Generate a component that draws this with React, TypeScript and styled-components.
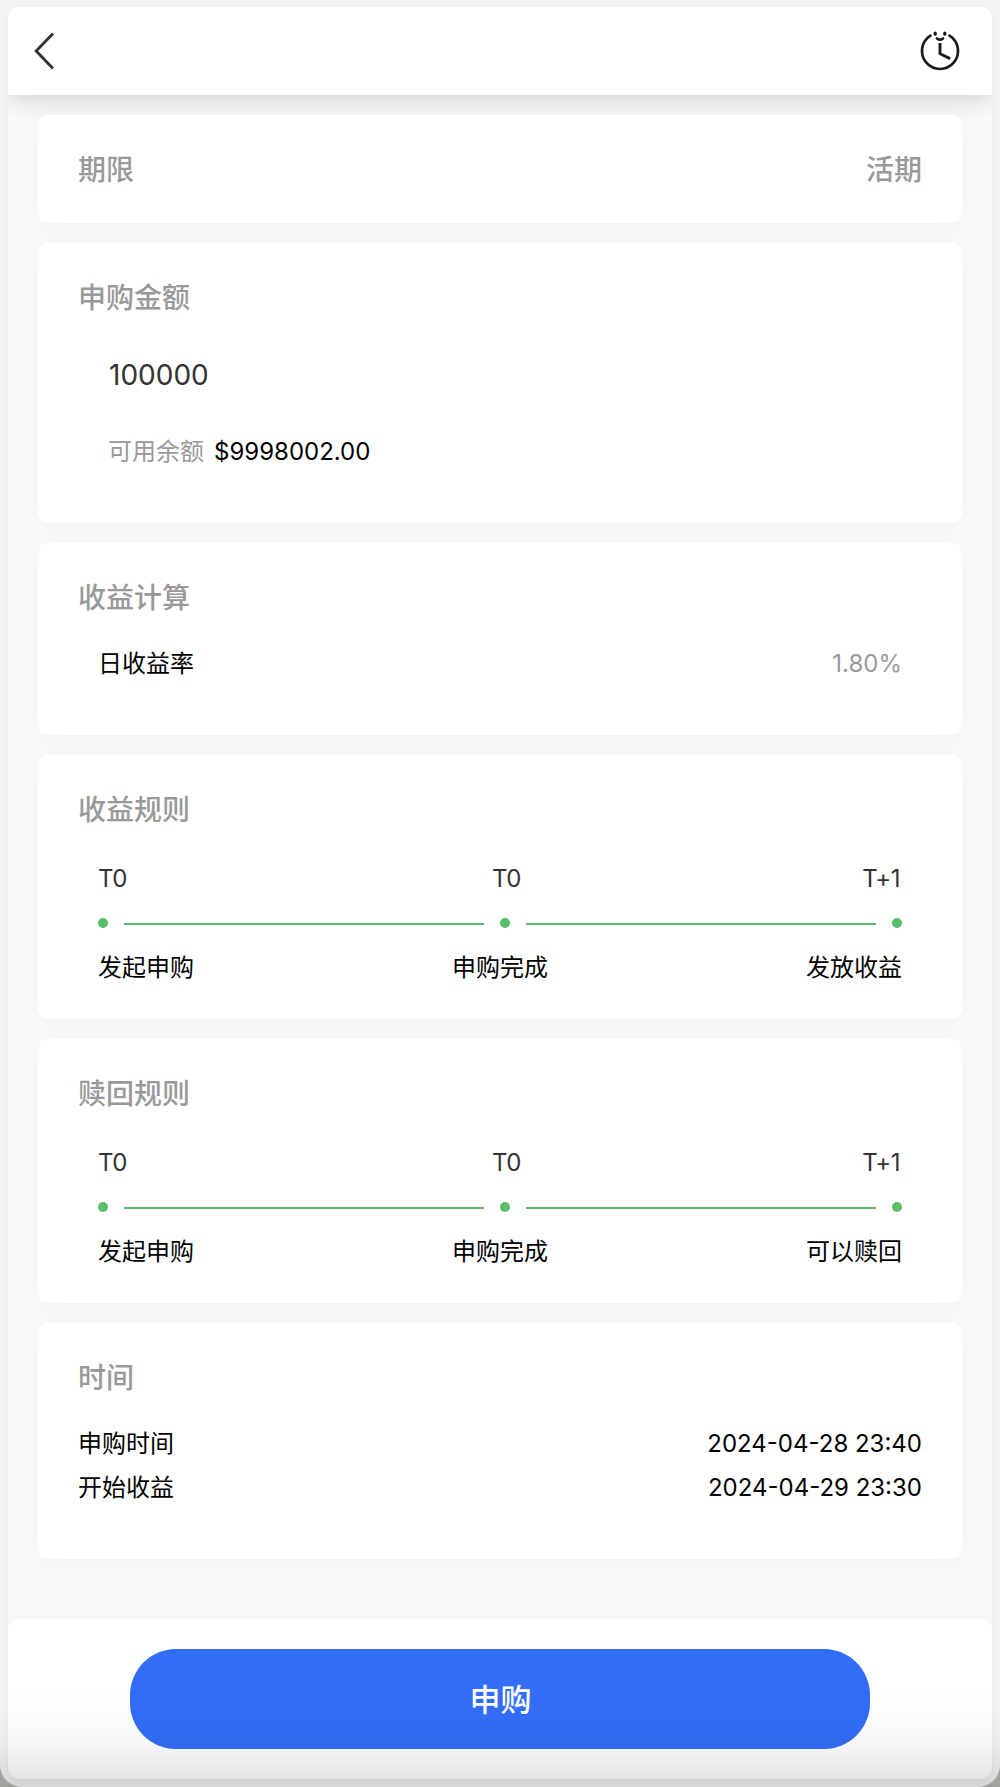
import React from "react";
import styled, { createGlobalStyle } from "styled-components";

const GlobalStyle = createGlobalStyle`
  * { box-sizing: border-box; }
  body {
    margin: 0;
    background: #a3a29d;
    font-family: Inter, "Noto Sans CJK SC", sans-serif;
    font-weight: 420;
    color: #000;
  }
`;

const Frame = styled.div`
  position: relative;
  width: 1000px;
  height: 1787px;
  padding: 7px 8px 8px;
  border-radius: 0 0 22px 22px;
  background: #f2f4f6;
  overflow: hidden;
`;

const BottomShade = styled.div`
  position: absolute;
  left: 0;
  right: 0;
  bottom: 0;
  height: 100px;
  pointer-events: none;
  background: linear-gradient(
    rgba(0, 0, 0, 0),
    rgba(0, 0, 0, 0.008) 25%,
    rgba(0, 0, 0, 0.035) 55%,
    rgba(0, 0, 0, 0.09) 85%,
    rgba(0, 0, 0, 0.12)
  );
`;

const Screen = styled.div`
  display: flex;
  flex-direction: column;
  height: 100%;
  border-radius: 12px;
  background: #fafafa;
  overflow: hidden;
`;

const ScreenShadow = styled.div`
  height: 100%;
  border-radius: 12px;
  box-shadow: 0 2px 5px rgba(0, 0, 0, 0.05);
`;

const Header = styled.header`
  display: flex;
  flex: none;
  align-items: center;
  justify-content: space-between;
  height: 88px;
  padding: 0 30px 0 24px;
  background: #fff;
  box-shadow: 0 4px 24px rgba(0, 0, 0, 0.18);
`;

const IconButton = styled.button`
  display: flex;
  padding: 0;
  border: 0;
  background: none;
`;

const Content = styled.main`
  display: flex;
  flex: 1;
  flex-direction: column;
  gap: 20px;
  padding: 20px 30px 0;
`;

const Card = styled.section<{ $height: number }>`
  height: ${(p) => p.$height}px;
  padding: 41px 40px 39px;
  border-radius: 10px;
  background: #fff;
  box-shadow: 0 4px 24px rgba(0, 0, 0, 0.04);
`;

const Row = styled.div<{ $inset?: number; $top?: number }>`
  display: flex;
  align-items: center;
  justify-content: space-between;
  margin: ${(p) => p.$top ?? 0}px ${(p) => p.$inset ?? 0}px 0;
`;

const Title = styled.div`
  font-size: 28px;
  font-weight: 450;
  line-height: 28px;
  color: #999;
`;

const Text = styled.span<{ $color?: string; $line?: number }>`
  font-size: 24px;
  line-height: ${(p) => p.$line ?? 24}px;
  color: ${(p) => p.$color ?? "#000"};
`;

const Amount = styled.div`
  margin: 49px 0 0 31px;
  font-size: 28px;
  font-weight: 400;
  line-height: 28px;
  color: #333;
`;

const Balance = styled.div`
  display: flex;
  gap: 10px;
  margin: 51px 0 0 30px;
`;

const Days = styled.div`
  display: grid;
  grid-template-columns: 394px 1fr auto;
  margin: 43px 22px 0 20px;
  letter-spacing: -0.5px;
`;

const Track = styled.div`
  display: flex;
  align-items: center;
  gap: 16px;
  height: 10px;
  margin: 27px 20px 0;
`;

const Dot = styled.i`
  flex: none;
  width: 10px;
  height: 10px;
  border-radius: 50%;
  background: #58be6a;
`;

const Line = styled.i<{ $width: number }>`
  width: ${(p) => p.$width}px;
  height: 2px;
  margin-top: 2px;
  background: #58be6a;
`;

const Footer = styled.footer`
  display: flex;
  flex: none;
  justify-content: center;
  height: 160px;
  padding-top: 30px;
  border-radius: 12px 12px 0 0;
  background: #fff;
  box-shadow: 0 -2px 20px rgba(0, 0, 0, 0.03);
`;

const BuyButton = styled.button`
  width: 740px;
  height: 100px;
  padding: 2px 0 0 1px;
  border: 0;
  border-radius: 46px;
  background: #326df6;
  color: #fff;
  font: 460 31px / 98px Inter, "Noto Sans CJK SC", sans-serif;
`;

const BackIcon = () => (
  <svg width="24" height="40" viewBox="0 0 24 40" fill="none" stroke="#333" strokeWidth="2.900">
    <path d="M21 2.600 4.200 20l16.800 17.400" />
  </svg>
);

const ClockIcon = () => (
  <svg width="44" height="44" viewBox="0 0 44 44" fill="none" stroke="#1a1a1a" strokeWidth="2.700" strokeLinecap="round">
    <path d="M12.500 6.700A18 18 0 1 0 31.500 6.700" />
    <path d="M22 15.500v9.200l8.800 4.300" strokeWidth="2.900" strokeLinecap="square" />
    <path d="M19 9.400q3 2.400 6 0" strokeWidth="2.600" />
    <path d="M17.200 4v1.200M26.800 4v1.200" strokeWidth="3.200" />
  </svg>
);

interface Step {
  day: string;
  label: string;
}

const earningSteps: Step[] = [
  { day: "T0", label: "发起申购" },
  { day: "T0", label: "申购完成" },
  { day: "T+1", label: "发放收益" },
];

const redeemSteps: Step[] = [
  { day: "T0", label: "发起申购" },
  { day: "T0", label: "申购完成" },
  { day: "T+1", label: "可以赎回" },
];

const times = [
  ["申购时间", "2024-04-28 23:40"],
  ["开始收益", "2024-04-29 23:30"],
];

function RuleCard({ title, steps }: { title: string; steps: Step[] }) {
  return (
    <Card $height={264}>
      <Title>{title}</Title>
      <Days>
        {steps.map((s, i) => (
          <Text key={i} $color="#333">{s.day}</Text>
        ))}
      </Days>
      <Track>
        <Dot />
        <Line $width={360} />
        <Dot />
        <Line $width={350} />
        <Dot />
      </Track>
      <Row $inset={20} $top={28}>
        {steps.map((s) => (
          <Text key={s.label}>{s.label}</Text>
        ))}
      </Row>
    </Card>
  );
}

export default function App() {
  return (
    <Frame>
      <GlobalStyle />
      <ScreenShadow>
        <Screen>
          <Header>
            <IconButton aria-label="返回"><BackIcon /></IconButton>
            <IconButton aria-label="记录"><ClockIcon /></IconButton>
          </Header>
          <Content>
            <Card $height={108}>
              <Row>
                <Title>期限</Title>
                <Title>活期</Title>
              </Row>
            </Card>
            <Card $height={280}>
              <Title>申购金额</Title>
              <Amount>100000</Amount>
              <Balance>
                <Text $color="#999">可用余额</Text>
                <Text>$9998002.00</Text>
              </Balance>
            </Card>
            <Card $height={192}>
              <Title>收益计算</Title>
              <Row $inset={20} $top={40}>
                <Text>日收益率</Text>
                <Text $color="#999">1.80%</Text>
              </Row>
            </Card>
            <RuleCard title="收益规则" steps={earningSteps} />
            <RuleCard title="赎回规则" steps={redeemSteps} />
            <Card $height={236}>
              <Title>时间</Title>
              <Row $top={30} />
              {times.map(([label, value]) => (
                <Row key={label}>
                  <Text $line={44}>{label}</Text>
                  <Text $line={44}>{value}</Text>
                </Row>
              ))}
            </Card>
          </Content>
          <Footer>
            <BuyButton>申购</BuyButton>
          </Footer>
        </Screen>
      </ScreenShadow>
      <BottomShade />
    </Frame>
  );
}
